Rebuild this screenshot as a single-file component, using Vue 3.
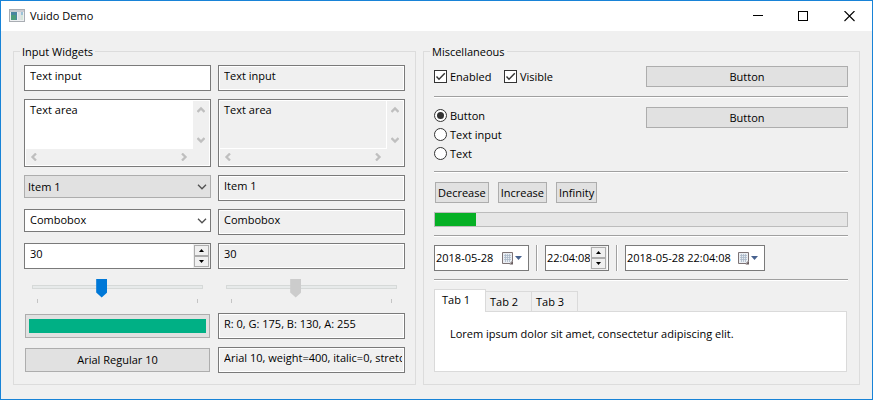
<script setup>
import { ref } from 'vue'

const text = ref('Text input')
const area = ref('Text area')
const item = ref('Item 1')
const combo = ref('Combobox')
const number = ref('30')
const level = ref(40)
const color = ref('R: 0, G: 175, B: 130, A: 255')
const font = ref('Arial 10, weight=400, italic=0, stretch=0')
const enabled = ref(true)
const visible = ref(true)
const kind = ref('Button')
const kinds = ['Button', 'Text input', 'Text']
const progress = ref(10)
const date = ref('2018-05-28')
const time = ref('22:04:08')
const dateTime = ref('2018-05-28 22:04:08')
const tabs = ['Tab 1', 'Tab 2', 'Tab 3']
const tab = ref('Tab 1')
</script>

<template>
  <div class="window">
    <header class="titlebar">
      <svg class="app-icon" width="16" height="14" viewBox="0 0 16 14">
        <rect x="0.5" y="0.5" width="15" height="12" fill="#eef0f2" stroke="#a9adb3" />
        <rect x="1" y="1" width="14" height="2" fill="#c9ccd2" />
        <rect x="2" y="3" width="6" height="8" fill="#4a86a0" />
        <rect x="2" y="6" width="5" height="5" fill="#4d9c7c" />
        <rect x="9" y="3" width="3" height="8" fill="#dfe2e6" />
        <rect x="12" y="3" width="2" height="3" fill="#9cc3d8" />
        <rect x="12" y="6" width="2" height="5" fill="#d5e6da" />
      </svg>
      <h1 class="title">Vuido Demo</h1>
      <div class="window-buttons">
        <button type="button" aria-label="Minimize">
          <svg width="11" height="11" viewBox="0 0 11 11"><path d="M1 4.5H11" stroke="#000" /></svg>
        </button>
        <button type="button" aria-label="Maximize">
          <svg width="11" height="11" viewBox="0 0 11 11"><rect x="0.5" y="0.5" width="9" height="9" fill="none" stroke="#000" /></svg>
        </button>
        <button type="button" aria-label="Close">
          <svg width="11" height="11" viewBox="0 0 11 11"><path d="M0.5 0L10.5 10M10.5 0L0.5 10" stroke="#000" stroke-width="1.1" /></svg>
        </button>
      </div>
    </header>

    <main class="content">
      <fieldset class="group">
        <legend>Input Widgets</legend>
        <div class="form">
          <input v-model="text" class="box" type="text" aria-label="Text input" />
          <input :value="text" class="box readonly" type="text" readonly aria-label="Text value" />

          <div class="area">
            <textarea v-model="area" aria-label="Text area"></textarea>
            <div class="bar vertical">
              <svg width="8" height="8" viewBox="0 0 8 8"><path d="M0.5 6L4 2.5L7.5 6" /></svg>
              <svg width="8" height="8" viewBox="0 0 8 8"><path d="M0.5 2L4 5.5L7.5 2" /></svg>
            </div>
            <div class="bar horizontal">
              <svg width="8" height="8" viewBox="0 0 8 8"><path d="M6 0.5L2.5 4L6 7.5" /></svg>
              <svg width="8" height="8" viewBox="0 0 8 8"><path d="M2 0.5L5.5 4L2 7.5" /></svg>
            </div>
          </div>
          <div class="area readonly">
            <textarea :value="area" readonly aria-label="Text area value"></textarea>
            <div class="bar vertical">
              <svg width="8" height="8" viewBox="0 0 8 8"><path d="M0.5 6L4 2.5L7.5 6" /></svg>
              <svg width="8" height="8" viewBox="0 0 8 8"><path d="M0.5 2L4 5.5L7.5 2" /></svg>
            </div>
            <div class="bar horizontal">
              <svg width="8" height="8" viewBox="0 0 8 8"><path d="M6 0.5L2.5 4L6 7.5" /></svg>
              <svg width="8" height="8" viewBox="0 0 8 8"><path d="M2 0.5L5.5 4L2 7.5" /></svg>
            </div>
          </div>

          <div class="dropdown">
            <select v-model="item" aria-label="Item">
              <option>Item 1</option>
              <option>Item 2</option>
              <option>Item 3</option>
            </select>
            <svg class="chevron" width="10" height="6" viewBox="0 0 10 6"><path d="M1 0.8L5 4.8L9 0.8" /></svg>
          </div>
          <input :value="item" class="box readonly" type="text" readonly aria-label="Item value" />

          <div class="dropdown">
            <input v-model="combo" type="text" aria-label="Combobox" />
            <svg class="chevron" width="10" height="6" viewBox="0 0 10 6"><path d="M1 0.8L5 4.8L9 0.8" /></svg>
          </div>
          <input :value="combo" class="box readonly" type="text" readonly aria-label="Combobox value" />

          <div class="spin">
            <input v-model="number" type="text" aria-label="Number" />
            <div class="steps">
              <button type="button" aria-label="Increment"><svg width="5" height="3" viewBox="0 0 5 3"><path d="M0 3L2.5 0L5 3Z" /></svg></button>
              <button type="button" aria-label="Decrement"><svg width="5" height="3" viewBox="0 0 5 3"><path d="M0 0L2.5 3L5 0Z" /></svg></button>
            </div>
          </div>
          <input :value="number" class="box readonly" type="text" readonly aria-label="Number value" />

          <div class="slider">
            <input v-model="level" type="range" min="0" max="100" aria-label="Slider" />
            <div class="ticks"><i></i><i></i></div>
          </div>
          <div class="slider">
            <input :value="level" type="range" min="0" max="100" disabled aria-label="Slider value" />
            <div class="ticks"><i></i><i></i></div>
          </div>

          <button class="button picker" type="button" aria-label="Color"><span class="swatch"></span></button>
          <input :value="color" class="box readonly" type="text" readonly aria-label="Color value" />

          <button class="button picker" type="button">Arial Regular 10</button>
          <input :value="font" class="box readonly" type="text" readonly aria-label="Font value" />
        </div>
      </fieldset>

      <fieldset class="group misc">
        <legend>Miscellaneous</legend>
        <div class="stack">
          <div class="split">
            <div class="checks">
              <label class="check"><input v-model="enabled" type="checkbox" />
                <svg width="13" height="13" viewBox="0 0 13 13"><rect x="0.5" y="0.5" width="12" height="12" /><path v-if="enabled" d="M2.5 6.5L5 9.2L10.8 3.2" /></svg>Enabled</label>
              <label class="check"><input v-model="visible" type="checkbox" />
                <svg width="13" height="13" viewBox="0 0 13 13"><rect x="0.5" y="0.5" width="12" height="12" /><path v-if="visible" d="M2.5 6.5L5 9.2L10.8 3.2" /></svg>Visible</label>
            </div>
            <button class="button" type="button">Button</button>
          </div>
          <hr />
          <div class="split">
            <div class="radios">
              <label v-for="k in kinds" :key="k" class="check"><input v-model="kind" type="radio" name="kind" :value="k" />
                <svg width="13" height="13" viewBox="0 0 13 13"><circle cx="6.5" cy="6.5" r="6" /><circle v-if="kind === k" class="dot" cx="6.5" cy="6.5" r="3.5" /></svg>{{ k }}</label>
            </div>
            <button class="button" type="button">Button</button>
          </div>
          <hr />
          <div class="actions">
            <button class="button" type="button" @click="progress = Math.max(0, progress - 10)">Decrease</button>
            <button class="button" type="button" @click="progress = Math.min(100, progress + 10)">Increase</button>
            <button class="button" type="button">Infinity</button>
          </div>
          <div class="progress" role="progressbar" :aria-valuenow="progress"><div class="fill" :style="{ width: progress + '%' }"></div></div>
        </div>

        <div class="stack lower">
          <hr />
          <div class="pickers">
            <div class="date">
              <input v-model="date" type="text" size="10" aria-label="Date" />
              <button type="button" aria-label="Choose date">
                <svg width="20" height="13" viewBox="0 0 20 13"><path d="M0.5 0.5H10.5V9L8 11.5H0.5Z" fill="#e9edf2" stroke="#7d7375" /><path d="M2 3.5H9M2 5.5H9M2 7.5H9M3.5 2V10M5.5 2V10M7.5 2V10" stroke="#a9b7c8" stroke-width="0.8" /><path d="M7.5 12.5L11 9V12.5Z" fill="#6a5e61" /><path d="M13 4H20L16.5 8Z" fill="#47628f" /></svg>
              </button>
            </div>
            <i class="rule"></i>
            <div class="spin time">
              <input v-model="time" type="text" size="8" aria-label="Time" />
              <div class="steps">
                <button type="button" aria-label="Later"><svg width="5" height="3" viewBox="0 0 5 3"><path d="M0 3L2.5 0L5 3Z" /></svg></button>
                <button type="button" aria-label="Earlier"><svg width="5" height="3" viewBox="0 0 5 3"><path d="M0 0L2.5 3L5 0Z" /></svg></button>
              </div>
            </div>
            <i class="rule"></i>
            <div class="date long">
              <input v-model="dateTime" type="text" size="19" aria-label="Date and time" />
              <button type="button" aria-label="Choose date and time">
                <svg width="20" height="13" viewBox="0 0 20 13"><path d="M0.5 0.5H10.5V9L8 11.5H0.5Z" fill="#e9edf2" stroke="#7d7375" /><path d="M2 3.5H9M2 5.5H9M2 7.5H9M3.5 2V10M5.5 2V10M7.5 2V10" stroke="#a9b7c8" stroke-width="0.8" /><path d="M7.5 12.5L11 9V12.5Z" fill="#6a5e61" /><path d="M13 4H20L16.5 8Z" fill="#47628f" /></svg>
              </button>
            </div>
          </div>
          <hr />
          <div class="tabs">
            <div class="tablist" role="tablist">
              <button v-for="t in tabs" :key="t" type="button" role="tab" :class="{ active: tab === t }" :aria-selected="tab === t" @click="tab = t">{{ t }}</button>
            </div>
            <div class="panel" role="tabpanel">Lorem ipsum dolor sit amet, consectetur adipiscing elit.</div>
          </div>
        </div>
      </fieldset>
    </main>
  </div>
</template>

<style>
body {
  background: #f0f0f0;
}
</style>

<style scoped>
* {
  box-sizing: border-box;
}
.window {
  border: 1px solid #1883d7;
  background: #f0f0f0;
  color: #000;
  font: 11px/16px "Open Sans", "Noto Sans", sans-serif;
}
input, textarea, select, button {
  margin: 0;
  padding: 0;
  border: 0;
  border-radius: 0;
  outline: 0;
  background: none;
  color: inherit;
  font: inherit;
  min-width: 0;
}
svg {
  display: block;
  flex: none;
}

.titlebar {
  display: flex;
  align-items: center;
  height: 30px;
  padding-left: 8px;
  background: #fff;
}
.title {
  margin: 0 auto 0 5px;
  font-size: 11px;
  font-weight: 400;
}
.window-buttons {
  display: flex;
  height: 30px;
}
.window-buttons button {
  display: flex;
  align-items: center;
  justify-content: center;
  width: 46px;
}

.content {
  display: grid;
  grid-template-columns: 403fr 437fr;
  gap: 7px;
  padding: 13px 12px 14px;
}
.group {
  min-width: 0;
  margin: 0;
  padding: 6px 10px 11px;
  border: 1px solid #dcdcdc;
}
.group.misc {
  padding: 7px 11px 12px 10px;
}
legend {
  margin-left: -4px;
  padding: 0 2px;
  line-height: 15px;
}

.form {
  display: grid;
  grid-template-columns: 1fr 1fr;
  gap: 8px 7px;
  align-items: start;
}
.form > * {
  min-width: 0;
}
.box {
  width: 100%;
  height: 26px;
  padding: 0 2px 5px 5px;
  border: 1px solid #7a7a7a;
  background: #fff;
}
.box.readonly {
  box-shadow: inset 0 0 0 1px #fff;
  background: #f0f0f0;
}

.area {
  display: grid;
  grid-template-columns: 1fr 16px;
  grid-template-rows: 1fr 16px;
  height: 68px;
  padding: 1px;
  border: 1px solid #7a7a7a;
  background: #fff;
}
.area textarea {
  width: 100%;
  height: 100%;
  padding: 1px 4px;
  resize: none;
  overflow: hidden;
}
.area.readonly textarea {
  border: solid #fff;
  border-width: 0 1px 1px 0;
  background: #f0f0f0;
}
.bar {
  display: flex;
  justify-content: space-between;
  align-items: center;
  background: #f0f0f0;
}
.bar path {
  fill: none;
  stroke: #bfbfbf;
  stroke-width: 2.3;
}
.bar.vertical {
  flex-direction: column;
  padding: 5px 0;
}
.bar.horizontal {
  grid-column: 1 / 3;
  padding: 0 21px 0 4px;
}

.dropdown {
  display: grid;
  align-items: center;
  height: 23px;
}
.dropdown > * {
  grid-area: 1 / 1;
}
.dropdown select,
.dropdown input {
  appearance: none;
  width: 100%;
  height: 23px;
  padding: 0 20px 2px 5px;
  border: 1px solid #7a7a7a;
  background: #fff;
}
.dropdown select {
  padding: 0 20px 0 3px;
  border-color: #adadad;
  background: #e1e1e1;
}
.chevron {
  justify-self: end;
  margin-right: 4px;
  fill: none;
  stroke: #505050;
  stroke-width: 1.3;
  pointer-events: none;
}

.spin {
  display: flex;
  height: 26px;
  border: 1px solid #7a7a7a;
  background: #fff;
}
.spin input {
  flex: 1;
  width: 0;
  padding: 0 0 5px 5px;
}
.steps {
  display: grid;
  grid-template-rows: 1fr 1fr;
  width: 17px;
  padding: 1px;
  background: #f0f0f0;
}
.steps button {
  display: flex;
  align-items: center;
  justify-content: center;
  border: 1px solid #adadad;
  background: #f0f0f0;
}

.slider {
  height: 28px;
  padding: 0 8px;
}
.slider input {
  appearance: none;
  display: block;
  width: 100%;
  height: 19px;
}
.slider input::-webkit-slider-runnable-track {
  height: 4px;
  border: 1px solid #d6d9d8;
  background: #e7eaea;
}
.slider input::-webkit-slider-thumb {
  appearance: none;
  width: 11px;
  height: 19px;
  margin-top: -7px;
  background: #0078d7;
  clip-path: polygon(0 0, 100% 0, 100% 14px, 50% 100%, 0 14px);
}
.slider input:disabled::-webkit-slider-thumb {
  background: #ccc;
}
.ticks {
  display: flex;
  justify-content: space-between;
  margin-top: 3px;
  padding: 0 5px;
}
.ticks i {
  width: 1px;
  height: 4px;
  background: #c4c4c4;
}

.button {
  height: 21px;
  border: 1px solid #adadad;
  background: #e1e1e1;
  line-height: 16px;
}
.picker {
  height: 24px;
  margin: 1px;
}
.swatch {
  display: block;
  height: 14px;
  margin: 0 3px;
  background: #00b085;
}

.stack {
  display: flex;
  flex-direction: column;
  gap: 9px;
}
.stack.lower {
  gap: 8px;
  margin-top: 8px;
}
hr {
  width: 100%;
  height: 2px;
  margin: 0;
  border: 0;
  border-top: 1px solid #a0a0a0;
  background: #fff;
}
.split {
  display: grid;
  grid-template-columns: 1fr 1fr;
  gap: 10px;
  align-items: start;
}
.checks {
  display: flex;
  align-items: center;
  height: 21px;
}
.checks .check {
  width: 70px;
}
.radios {
  display: grid;
  gap: 2px;
}
.check {
  display: flex;
  align-items: center;
  gap: 3px;
  height: 17px;
}
.check input {
  position: absolute;
  width: 13px;
  height: 13px;
  opacity: 0;
}
.check svg {
  fill: #fff;
  stroke: #333;
}
.check path {
  fill: none;
  stroke-width: 1.4;
}
.check .dot {
  fill: #333;
  stroke: none;
}
.actions {
  display: flex;
  gap: 9px;
  padding-left: 1px;
}
.actions .button {
  padding: 0 2px;
}
.progress {
  height: 15px;
  border: 1px solid #bcbcbc;
  background: #e6e6e6;
}
.fill {
  height: 100%;
  background: #06b025;
}

.pickers {
  display: flex;
  gap: 7px;
}
.date {
  display: flex;
  align-items: center;
  width: 95px;
  height: 26px;
  padding: 0 6px 0 1px;
  border: 1px solid #7a7a7a;
  background: #fff;
}
.date.long {
  width: 140px;
}
.date input {
  flex: 1;
  width: 0;
}
.spin.time {
  width: 64px;
  padding-right: 1px;
}
.spin.time input {
  padding: 0 0 0 1px;
}
.rule {
  width: 2px;
  border-left: 1px solid #a0a0a0;
  background: #fff;
}

.tablist {
  display: flex;
  align-items: flex-end;
  height: 22px;
}
.tablist button {
  width: 47px;
  height: 20px;
  padding-left: 4px;
  border: 1px solid #dadada;
  border-bottom: 0;
  margin-right: -1px;
  text-align: left;
}
.tablist .active {
  z-index: 1;
  width: 52px;
  height: 23px;
  margin-bottom: -1px;
  padding: 0 0 2px 7px;
  background: #fff;
}
.panel {
  padding: 14px 15px 29px;
  margin-right: 1px;
  border: 1px solid #dadada;
  background: #fff;
}
</style>
